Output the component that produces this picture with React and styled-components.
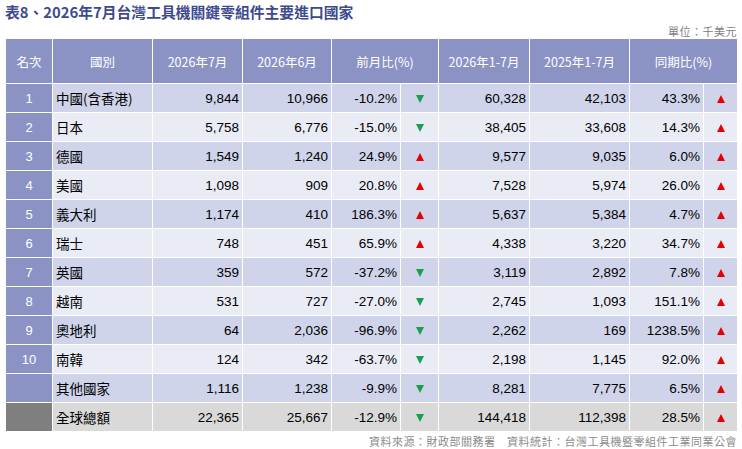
import React from 'react';
import styled, { createGlobalStyle } from 'styled-components';

const GlobalStyle = createGlobalStyle`
  html, body { margin: 0; padding: 0; background: #fff; }
  body { font-family: "Liberation Sans", "Noto Sans CJK TC", sans-serif; }
`;

const Page = styled.div`
  width: 742px;
  height: 449px;
  padding: 0 5px;
  box-sizing: border-box;
  overflow: hidden;
`;

const Title = styled.h1`
  margin: 0;
  padding-top: 2px;
  height: 22px;
  font-family: "Noto Sans CJK TC", sans-serif;
  font-size: 14.8px;
  line-height: 20px;
  font-weight: 700;
  color: #3d4a8f;
`;

const Note = styled.div`
  text-align: right;
  font-family: "Noto Sans CJK TC", sans-serif;
  font-size: 11px;
  line-height: 15px;
  height: 15px;
  color: #808080;
  letter-spacing: 0.5px;
`;

const Table = styled.table`
  width: 732px;
  table-layout: fixed;
  border-collapse: collapse;
`;

const HeadCell = styled.th`
  height: 44px;
  padding: 0;
  background: #8b93c5;
  color: #fff;
  font-family: "Noto Sans CJK TC", sans-serif;
  font-size: 12.5px;
  font-weight: 400;
  text-align: center;
  border: 1px solid #fff;
  border-top: none;
`;

const Row = styled.tr`
  height: 29px;
  background: ${p => (p.$total ? '#d9d9d9' : p.$odd ? '#cfd4ea' : '#e9ebf5')};
`;

const RankCell = styled.td`
  padding: 0;
  background: ${p => (p.$total ? '#7f7f7f' : '#8b93c5')};
  color: #fff;
  text-align: center;
  font-size: 13px;
  border: 1px solid #fff;
`;

const NameCell = styled.td`
  padding: 0 0 0 3px;
  color: #000;
  font-family: "Noto Sans CJK TC", sans-serif;
  font-size: 13.5px;
  border: 1px solid #fff;
`;

const NumCell = styled.td`
  padding: 0 3px 0 0;
  color: #000;
  text-align: right;
  font-size: 13.5px;
  border: 1px solid #fff;
`;

const ArrowCell = styled.td`
  padding: 0;
  text-align: center;
  border: 1px solid #fff;
`;

const Arrow = styled.span`
  display: inline-block;
  width: 0;
  height: 0;
  border-left: 4.5px solid transparent;
  border-right: 4.5px solid transparent;
  ${p =>
    p.$up
      ? 'border-bottom: 8px solid #e60000;'
      : 'border-top: 8px solid #18a050;'}
  vertical-align: middle;
`;

const Footer = styled.div`
  margin-top: 2px;
  text-align: right;
  font-family: "Noto Sans CJK TC", sans-serif;
  font-size: 11px;
  line-height: 14px;
  color: #8c8c8c;
  letter-spacing: 0.5px;
`;

const widths = [47, 100, 90, 89, 69, 38, 91, 100, 74, 34];

const rows = [
  ['1', '中國(含香港)', '9,844', '10,966', '-10.2%', '60,328', '42,103', '43.3%'],
  ['2', '日本', '5,758', '6,776', '-15.0%', '38,405', '33,608', '14.3%'],
  ['3', '德國', '1,549', '1,240', '24.9%', '9,577', '9,035', '6.0%'],
  ['4', '美國', '1,098', '909', '20.8%', '7,528', '5,974', '26.0%'],
  ['5', '義大利', '1,174', '410', '186.3%', '5,637', '5,384', '4.7%'],
  ['6', '瑞士', '748', '451', '65.9%', '4,338', '3,220', '34.7%'],
  ['7', '英國', '359', '572', '-37.2%', '3,119', '2,892', '7.8%'],
  ['8', '越南', '531', '727', '-27.0%', '2,745', '1,093', '151.1%'],
  ['9', '奧地利', '64', '2,036', '-96.9%', '2,262', '169', '1238.5%'],
  ['10', '南韓', '124', '342', '-63.7%', '2,198', '1,145', '92.0%'],
  ['', '其他國家', '1,116', '1,238', '-9.9%', '8,281', '7,775', '6.5%'],
  ['', '全球總額', '22,365', '25,667', '-12.9%', '144,418', '112,398', '28.5%'],
];

export default function App() {
  return (
    <Page>
      <GlobalStyle />
      <Title>表8、2026年7月台灣工具機關鍵零組件主要進口國家</Title>
      <Note>單位：千美元</Note>
      <Table>
        <colgroup>
          {widths.map((w, i) => <col key={i} style={{ width: w }} />)}
        </colgroup>
        <thead>
          <tr>
            <HeadCell>名次</HeadCell>
            <HeadCell>國別</HeadCell>
            <HeadCell>2026年7月</HeadCell>
            <HeadCell>2026年6月</HeadCell>
            <HeadCell colSpan={2}>前月比(%)</HeadCell>
            <HeadCell>2026年1-7月</HeadCell>
            <HeadCell>2025年1-7月</HeadCell>
            <HeadCell colSpan={2}>同期比(%)</HeadCell>
          </tr>
        </thead>
        <tbody>
          {rows.map((r, i) => {
            const total = i === rows.length - 1;
            return (
              <Row key={i} $odd={i % 2 === 0} $total={total}>
                <RankCell $total={total}>{r[0]}</RankCell>
                <NameCell>{r[1]}</NameCell>
                <NumCell>{r[2]}</NumCell>
                <NumCell>{r[3]}</NumCell>
                <NumCell>{r[4]}</NumCell>
                <ArrowCell><Arrow $up={!r[4].startsWith('-')} /></ArrowCell>
                <NumCell>{r[5]}</NumCell>
                <NumCell>{r[6]}</NumCell>
                <NumCell>{r[7]}</NumCell>
                <ArrowCell><Arrow $up={!r[7].startsWith('-')} /></ArrowCell>
              </Row>
            );
          })}
        </tbody>
      </Table>
      <Footer>資料來源：財政部關務署　資料統計：台灣工具機暨零組件工業同業公會</Footer>
    </Page>
  );
}
